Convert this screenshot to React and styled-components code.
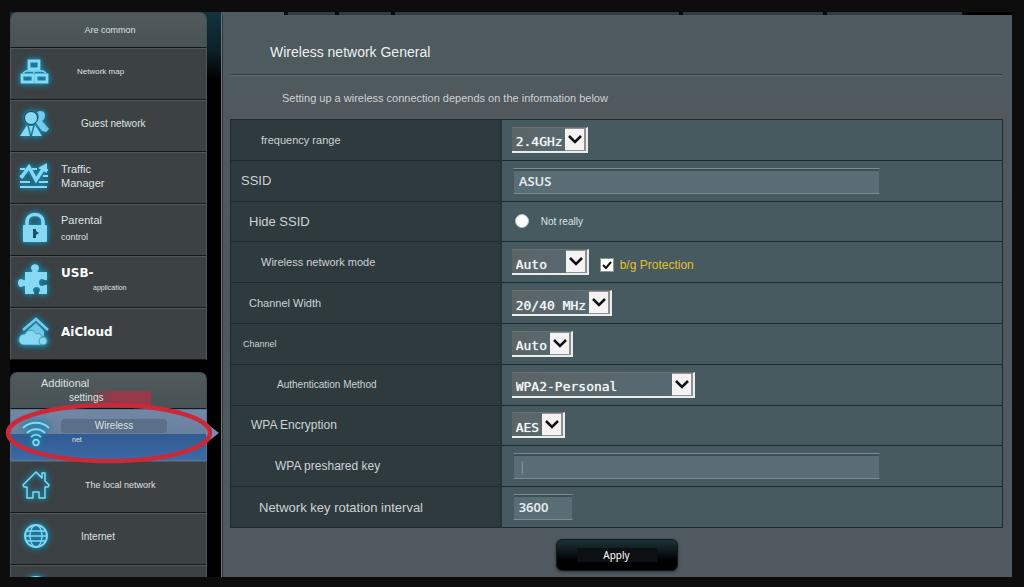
import styled, { createGlobalStyle } from "styled-components";

const menu = [
  { icon: "map", lines: [{ text: "Network map", size: 8, indent: 16 }] },
  { icon: "guest", lines: [{ text: "Guest network", size: 10, indent: 20 }] },
  { icon: "traffic", lines: [{ text: "Traffic", size: 11 }, { text: "Manager", size: 11 }] },
  { icon: "lock", lines: [{ text: "Parental", size: 11 }, { text: "control", size: 9 }], gap: 4 },
  { icon: "usb", lines: [{ text: "USB-", size: 12, bold: true }, { text: "application", size: 7, indent: 32 }], gap: 2 },
  { icon: "cloud", lines: [{ text: "AiCloud", size: 12, bold: true }] },
];

const extraMenu = [
  { icon: "house", lines: [{ text: "The local network", size: 9, indent: 24 }] },
  { icon: "globe", lines: [{ text: "Internet", size: 10, indent: 20 }] },
  { icon: "globe", lines: [] },
];

const icons = {
  map: (
    <>
      <path d="M11 5h10v8H11zM4 19h11v7H4zM18 19h11v7H18z" fill="none" stroke="currentColor" strokeWidth="2.800" />
      <path d="M16 14v3M5 17l3-2h17l3 2" fill="none" stroke="currentColor" strokeWidth="1.300" />
    </>
  ),
  guest: (
    <g fill="currentColor">
      <path d="M19 4c3-2 8-1 8 3 0 3-1 5-3 6l7 8-3 3-4-1-6-8c3-3 4-8 1-11z" opacity=".85" />
      <circle cx="13" cy="10" r="6.500" fill="currentColor" stroke="#23424f" strokeWidth="1" />
      <path d="M9 17 2 28h10zM17 17l7 11H14z" />
      <path d="M11 18h4l-2 8z" />
    </g>
  ),
  traffic: (
    <g fill="none" stroke="currentColor">
      <path d="M2 9h5M14 9h5M27 10h3M2 16h3M25 16h5M2 22h10M21 22h9M2 27h27" strokeWidth="1.800" />
      <path d="M3 18 11 7l7 13 8-12" strokeWidth="3.500" />
      <path d="m20 8 9-5v10z" fill="currentColor" stroke="none" />
    </g>
  ),
  lock: (
    <>
      <path d="M9 15V10c0-10 16-10 16 0v5" fill="none" stroke="currentColor" strokeWidth="3.500" />
      <rect x="5" y="13" width="24" height="17" rx="1" fill="currentColor" />
      <path d="M15 17h3v2l3 2-3 2v3h-3z" fill="#17546c" />
    </>
  ),
  usb: (
    <path
      d="M7 8h7c1-2-1-2-1-4 0-5 8-5 8 0 0 2-2 2-1 4h9v8c-2 1-3-1-5-1-4 0-4 7 0 7 2 0 3-2 5-1v9h-8c-1-2 1-2 1-4 0-4-7-4-7 0 0 2 2 2 1 4H7v-8c-2-1-2 1-4 1-4 0-4-8 0-8 2 0 2 2 4 1z"
      fill="currentColor"
    />
  ),
  cloud: (
    <>
      <path d="M5 14 18 3l12 11" fill="none" stroke="currentColor" strokeWidth="2.500" opacity=".85" />
      <path d="m9 15 9-8 8 8v10H9z" fill="currentColor" opacity=".8" />
      <path
        d="M6 29c-7 0-7-11 1-11 2-5 9-5 11 0 3-1 5 0 6 3 6-2 8 8 1 8z"
        fill="currentColor"
        stroke="#3a87a2"
        strokeWidth=".7"
      />
      <circle cx="25" cy="25" r="4" fill="currentColor" stroke="#3a87a2" strokeWidth=".7" />
    </>
  ),
  wifi: (
    <g fill="none" stroke="currentColor" strokeWidth="1.800">
      <path d="M5 11c7-7 19-7 26 0M9 16c5-5 13-5 18 0M13 20c3-3 7-3 10 0" />
      <circle cx="18" cy="25.500" r="2.800" />
    </g>
  ),
  house: (
    <path
      d="m18 3-13 13 1 2h3v11h6v-6h6v6h6V18h3l1-2-4-4V4h-3v5z"
      fill="none"
      stroke="currentColor"
      strokeWidth="1.500"
      strokeLinejoin="round"
    />
  ),
  globe: (
    <g fill="none" stroke="currentColor" strokeWidth="1.800">
      <circle cx="18" cy="15" r="11" />
      <ellipse cx="18" cy="15" rx="6" ry="11" strokeWidth="1.300" />
      <path d="M9 10h18M7 15h22M9 20h18" strokeWidth="1.300" />
    </g>
  ),
};

const MenuIcon = ({ name }) => (
  <Icon viewBox="0 0 32 32" aria-hidden="true">
    {icons[name]}
  </Icon>
);

const MenuItem = ({ item }) => (
  <Item href="#">
    <MenuIcon name={item.icon} />
    <Lines $gap={item.gap}>
      {item.lines.map((line) => (
        <Line key={line.text} $size={line.size} $indent={line.indent} $bold={line.bold}>
          {line.text}
        </Line>
      ))}
    </Lines>
  </Item>
);

const Dropdown = ({ id, value, width }) => (
  <SelectBox $width={width}>
    <Select id={id} defaultValue={value}>
      <option>{value}</option>
    </Select>
    <Arrow viewBox="0 0 21 23" aria-hidden="true">
      <path d="M0 0h21v23H0z" fill="#8d8f90" />
      <path d="M0 1h19v21H0z" fill="#f4f2f2" />
      <path d="m4 8 6 6 6-6" fill="none" stroke="#111" strokeWidth="2.500" />
    </Arrow>
  </SelectBox>
);

const Row = ({ id, label, size, indent, children }) => (
  <tr>
    <HeadCell scope="row" $size={size} $indent={indent}>
      <label htmlFor={id}>{label}</label>
    </HeadCell>
    <Cell>
      <Controls>{children}</Controls>
    </Cell>
  </tr>
);

const App = () => {
  return (
    <>
      <GlobalStyle />
      <Page>
        <Sidebar>
          <Group>
            <GroupTitle>Are common</GroupTitle>
            {menu.map((item) => (
              <MenuItem key={item.icon} item={item} />
            ))}
          </Group>
          <Group>
            <ExtraTitle>
              <span>Additional</span>
              <Marked>settings</Marked>
            </ExtraTitle>
            <ActiveItem href="#">
              <MenuIcon name="wifi" />
              <Lines $gap={1}>
                <Pill>Wireless</Pill>
                <Line $size={7} $indent={11}>net</Line>
              </Lines>
              <Pointer viewBox="0 0 13 20" aria-hidden="true">
                <path d="M0 0 13 10 0 20z" fill="#7590b0" />
              </Pointer>
              <Ring viewBox="0 0 212 66" aria-hidden="true">
                <ellipse cx="105" cy="33" rx="101" ry="28" fill="none" stroke="#cb2838" strokeWidth="4.500" />
              </Ring>
            </ActiveItem>
            {extraMenu.map((item, i) => (
              <MenuItem key={i} item={item} />
            ))}
          </Group>
        </Sidebar>
        <Panel>
          <Tabs>
            <Tab $grow={63} $active />
            <Tab $grow={48} />
            <Tab $grow={52} />
            <Tab $grow={286} />
            <Tab $grow={142} />
            <Tab $grow={136} />
            <Tab $grow={46} $empty />
          </Tabs>
          <Title>Wireless network General</Title>
          <Description>Setting up a wireless connection depends on the information below</Description>
          <Settings>
            <tbody>
              <Row id="band" label="frequency range" size={11} indent={30}>
                <Dropdown id="band" value="2.4GHz" />
              </Row>
              <Row id="ssid" label="SSID" size={13} indent={10}>
                <Input id="ssid" defaultValue="ASUS" />
              </Row>
              <Row id="hide" label="Hide SSID" size={13} indent={18}>
                <Radio id="hide" type="radio" name="hide" />
                <RadioLabel htmlFor="hide">Not really</RadioLabel>
              </Row>
              <Row id="mode" label="Wireless network mode" size={11} indent={30}>
                <Dropdown id="mode" value="Auto" width={77} />
                <CheckLabel>
                  <CheckBox>
                    <Check type="checkbox" defaultChecked />
                    <Tick viewBox="0 0 14 14" aria-hidden="true">
                      <path d="m3 7 3 3 5-6" fill="none" stroke="#111" strokeWidth="2" />
                    </Tick>
                  </CheckBox>
                  b/g Protection
                </CheckLabel>
              </Row>
              <Row id="width" label="Channel Width" size={11} indent={18}>
                <Dropdown id="width" value="20/40 MHz" />
              </Row>
              <Row id="channel" label="Channel" size={9} indent={12}>
                <Dropdown id="channel" value="Auto" />
              </Row>
              <Row id="auth" label="Authentication Method" size={10} indent={46}>
                <Dropdown id="auth" value="WPA2-Personal" width={183} />
              </Row>
              <Row id="crypto" label="WPA Encryption" size={12} indent={20}>
                <Dropdown id="crypto" value="AES" />
              </Row>
              <Row id="key" label="WPA preshared key" size={12} indent={44}>
                <Input id="key" defaultValue="|" $thin />
              </Row>
              <Row id="interval" label="Network key rotation interval" size={13} indent={28}>
                <Input id="interval" defaultValue="3600" $short />
              </Row>
            </tbody>
          </Settings>
          <Apply type="button">
            <span>Apply</span>
          </Apply>
        </Panel>
      </Page>
    </>
  );
};
export default App;

const GlobalStyle = createGlobalStyle`
  * {
    box-sizing: border-box;
  }
  body {
    margin: 0;
    background-color: #0d0d0d;
    color: #dce1e3;
    font-family: "Liberation Sans", Arial, sans-serif;
  }
`;

const Page = styled.div`
  display: flex;
  gap: 14px;
  height: 100vh;
  padding: 12px 0 0 10px;
  border: solid #0d0d0d;
  border-width: 0 12px 10px 0;
  overflow: hidden;
  background:
    linear-gradient(90deg, #0d0d0d 10px, transparent 10px),
    linear-gradient(#0d0d0d 12px, #12323c 12px, #0c2129 50px, #000 80px);
`;

const Sidebar = styled.nav`
  display: flex;
  flex-direction: column;
  flex: none;
  gap: 12px;
  width: 197px;
`;

const Group = styled.div`
  flex: none;
`;

const GroupTitle = styled.div`
  display: flex;
  align-items: center;
  justify-content: center;
  height: 36px;
  padding-left: 3px;
  font-size: 9px;
  background: linear-gradient(#50595c, #495255);
  border: 1px solid #454e51;
  border-bottom-color: #15181a;
  border-radius: 7px 7px 0 0;
`;

const ExtraTitle = styled(GroupTitle)`
  flex-direction: column;
  align-items: flex-start;
  gap: 1px;
  height: 37px;
  padding: 0 30px;
  font-size: 11px;
  line-height: 14px;
`;

const Marked = styled.span`
  width: 82px;
  margin-left: 28px;
  font-size: 10px;
  background: linear-gradient(90deg, transparent 20px, #943a48 44px);
`;

const Item = styled.a`
  position: relative;
  display: flex;
  align-items: center;
  height: 52px;
  padding: 0 9px 5px;
  color: #dce1e3;
  text-decoration: none;
  background-color: #3c4143;
  border: 1px solid #51585a;
  border-bottom-color: #16191a;
`;

const ActiveItem = styled(Item)`
  background: linear-gradient(#7188a5, #68809f 24px, #315b91 24px, #3c6aa6);
  border-color: #587497;
`;

const Icon = styled.svg`
  flex: none;
  width: 32px;
  height: 32px;
  margin-right: 11px;
  margin-left: -2px;
  color: #86d8f3;
  filter: drop-shadow(0 0 2px #1591bb) drop-shadow(0 0 3px #14799c);
`;

const Lines = styled.span`
  display: flex;
  flex-direction: column;
  gap: ${(props) => props.$gap || 0}px;
`;

const Line = styled.span`
  padding-left: ${(props) => props.$indent || 0}px;
  font-family: ${(props) => (props.$bold ? '"DejaVu Sans", Verdana, sans-serif' : "inherit")};
  font-size: ${(props) => props.$size}px;
  font-weight: ${(props) => (props.$bold ? "bold" : "normal")};
  line-height: ${(props) => (props.$size > 9 ? 14 : 12)}px;
  color: ${(props) => (props.$bold ? "#fff" : "inherit")};
`;

const Pill = styled.span`
  width: 106px;
  font-size: 10px;
  line-height: 14px;
  text-align: center;
  background-color: #5b6f88;
  border-radius: 4px;
`;

const Pointer = styled.svg`
  position: absolute;
  top: 13px;
  left: 100%;
  width: 13px;
  height: 20px;
`;

const Ring = styled.svg`
  position: absolute;
  z-index: 1;
  top: -10px;
  left: -7px;
  width: 212px;
  height: 66px;
`;

const Panel = styled.main`
  display: flex;
  flex-direction: column;
  flex: 1;
  background: linear-gradient(#4f5b60, #4f5a5f 70px, #51585e 90px, #4f595f);
  box-shadow: inset 1px 0 #6a767b, inset 2px 0 #2b373c;
`;

const Tabs = styled.div`
  display: flex;
  gap: 4px;
  height: 3px;
  background-color: #060a0c;
`;

const Tab = styled.div`
  flex: ${(props) => props.$grow};
  background-color: ${(props) => (props.$empty ? "#000" : props.$active ? "#4f5b60" : "#303c41")};
`;

const Title = styled.h1`
  margin: 0 10px;
  padding: 28px 39px 13px;
  font-size: 14px;
  font-weight: normal;
  line-height: 18px;
  color: #eceff0;
  border-bottom: 1px solid #303b40;
  box-shadow: 0 1px #636f74;
`;

const Description = styled.p`
  margin: 0;
  padding: 16px 61px 14px;
  font-size: 11px;
  line-height: 14px;
  color: #cdd2d5;
`;

const Settings = styled.table`
  height: 409px;
  margin: 0 9px;
  border-collapse: collapse;
  table-layout: fixed;
  border: 1px solid #1e292e;

  tr {
    border-bottom: 1px solid #1e292e;
  }
`;

const HeadCell = styled.th`
  width: 35%;
  padding: 0 0 0 ${(props) => props.$indent}px;
  font-size: ${(props) => props.$size}px;
  font-weight: normal;
  text-align: left;
  color: #cdd3d6;
  background-color: #2f3a3f;
  border-right: 2px solid #26343a;
`;

const Cell = styled.td`
  padding: 0 10px;
  background-color: #475a5f;
`;

const Controls = styled.div`
  display: flex;
  align-items: center;
  height: 28px;
`;

const SelectBox = styled.span`
  display: inline-grid;
  width: ${(props) => (props.$width ? props.$width + "px" : "auto")};
  border: solid #e8eeee;
  border-width: 0 2px 2px 0;
  border-top: 1px solid #6d6f70;
`;

const Select = styled.select`
  grid-area: 1 / 1;
  height: 23px;
  padding: 5px 23px 0 4px;
  font-family: "DejaVu Sans Mono", monospace;
  font-size: 13px;
  color: #f4f8f9;
  text-shadow: 0 0 1px #dfe8ea;
  background: linear-gradient(90deg, #5b6467, #566a72);
  border: none;
  border-radius: 0;
  appearance: none;
`;

const Arrow = styled.svg`
  grid-area: 1 / 1;
  justify-self: end;
  width: 21px;
  height: 23px;
  pointer-events: none;
`;

const Input = styled.input`
  width: ${(props) => (props.$short ? "60px" : "100%")};
  max-width: 367px;
  height: 26px;
  margin-left: 1px;
  padding: 0 5px;
  font-family: "Noto Sans", sans-serif;
  font-size: 13px;
  font-weight: ${(props) => (props.$thin ? 300 : 600)};
  color: ${(props) => (props.$thin ? "#a3b0b5" : "#e4eaec")};
  background-color: #596d74;
  border: 1px solid #4a5a60;
  border-top-color: #7c8c91;
  border-bottom-color: #7c8c91;
  box-shadow: inset 0 2px #3f4f55;
`;

const Radio = styled.input`
  width: 14px;
  height: 14px;
  margin: 0 12px 0 3px;
  background-color: #fff;
  border: 1px solid #b9c0c2;
  border-radius: 50%;
  appearance: none;
`;

const RadioLabel = styled.label`
  font-size: 10px;
  color: #dfe4e6;
`;

const CheckLabel = styled.label`
  display: flex;
  align-items: center;
  gap: 6px;
  margin-left: 11px;
  padding-top: 6px;
  font-size: 12px;
  color: #e3c12d;
`;

const CheckBox = styled.span`
  display: grid;
`;

const Check = styled.input`
  grid-area: 1 / 1;
  width: 14px;
  height: 14px;
  margin: 0;
  background-color: #fff;
  border: 1px solid #8b9496;
  appearance: none;
`;

const Tick = styled.svg`
  grid-area: 1 / 1;
  width: 14px;
  height: 14px;
  pointer-events: none;
`;

const Apply = styled.button`
  align-self: center;
  height: 32px;
  margin-top: 11px;
  padding: 0 20px;
  font-family: "Noto Sans", sans-serif;
  font-size: 10px;
  color: #fff;
  background: linear-gradient(#1c3238, #0a1214 45%, #000 70%);
  border: 1px solid #10191c;
  border-radius: 6px;
  box-shadow: 0 1px 3px #2a3236;

  span {
    display: block;
    width: 80px;
    line-height: 14px;
    background-color: #0d1012;
  }
`;
